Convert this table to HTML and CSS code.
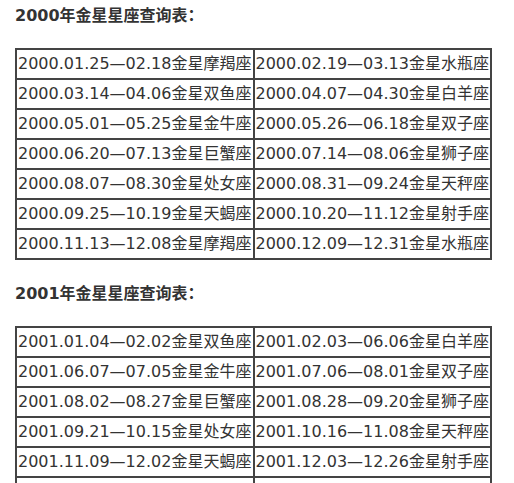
FILE: index.html
```html
<!DOCTYPE html>
<html lang="zh">
<head>
<meta charset="utf-8">
<link rel="stylesheet" href="styles.css">
</head>
<body>
<section class="block">
  <h2 class="title">2000年金星星座查询表：</h2>
  <table class="grid">
    <tr><td>2000.01.25—02.18金星摩羯座</td><td>2000.02.19—03.13金星水瓶座</td></tr>
    <tr><td>2000.03.14—04.06金星双鱼座</td><td>2000.04.07—04.30金星白羊座</td></tr>
    <tr><td>2000.05.01—05.25金星金牛座</td><td>2000.05.26—06.18金星双子座</td></tr>
    <tr><td>2000.06.20—07.13金星巨蟹座</td><td>2000.07.14—08.06金星狮子座</td></tr>
    <tr><td>2000.08.07—08.30金星处女座</td><td>2000.08.31—09.24金星天秤座</td></tr>
    <tr><td>2000.09.25—10.19金星天蝎座</td><td>2000.10.20—11.12金星射手座</td></tr>
    <tr><td>2000.11.13—12.08金星摩羯座</td><td>2000.12.09—12.31金星水瓶座</td></tr>
  </table>
</section>
<section class="block">
  <h2 class="title">2001年金星星座查询表：</h2>
  <table class="grid">
    <tr><td>2001.01.04—02.02金星双鱼座</td><td>2001.02.03—06.06金星白羊座</td></tr>
    <tr><td>2001.06.07—07.05金星金牛座</td><td>2001.07.06—08.01金星双子座</td></tr>
    <tr><td>2001.08.02—08.27金星巨蟹座</td><td>2001.08.28—09.20金星狮子座</td></tr>
    <tr><td>2001.09.21—10.15金星处女座</td><td>2001.10.16—11.08金星天秤座</td></tr>
    <tr><td>2001.11.09—12.02金星天蝎座</td><td>2001.12.03—12.26金星射手座</td></tr>
    <tr><td>2001.12.27—01.20金星摩羯座</td><td>2002.01.21—02.14金星水瓶座</td></tr>
  </table>
</section>
</body>
</html>
```
FILE: styles.css
```css
html, body {
  margin: 0;
  background: #fff;
}
body {
  padding: 4px 0 0 15px;
  font-family: "DejaVu Sans", "Noto Sans CJK SC", sans-serif;
  font-size: 16px;
  color: #333;
}
.block {
  margin: 0 0 22px;
}
.title {
  margin: 0 0 20px;
  font-size: 16px;
  font-weight: bold;
  line-height: 24px;
  color: #333;
}
.grid {
  border-collapse: collapse;
  border: 2px solid #444;
  width: 477px;
  table-layout: fixed;
}
.grid td {
  border: 2px solid #444;
  height: 28px;
  padding: 0 1px;
  line-height: 28px;
  white-space: nowrap;
  overflow: hidden;
}
```
